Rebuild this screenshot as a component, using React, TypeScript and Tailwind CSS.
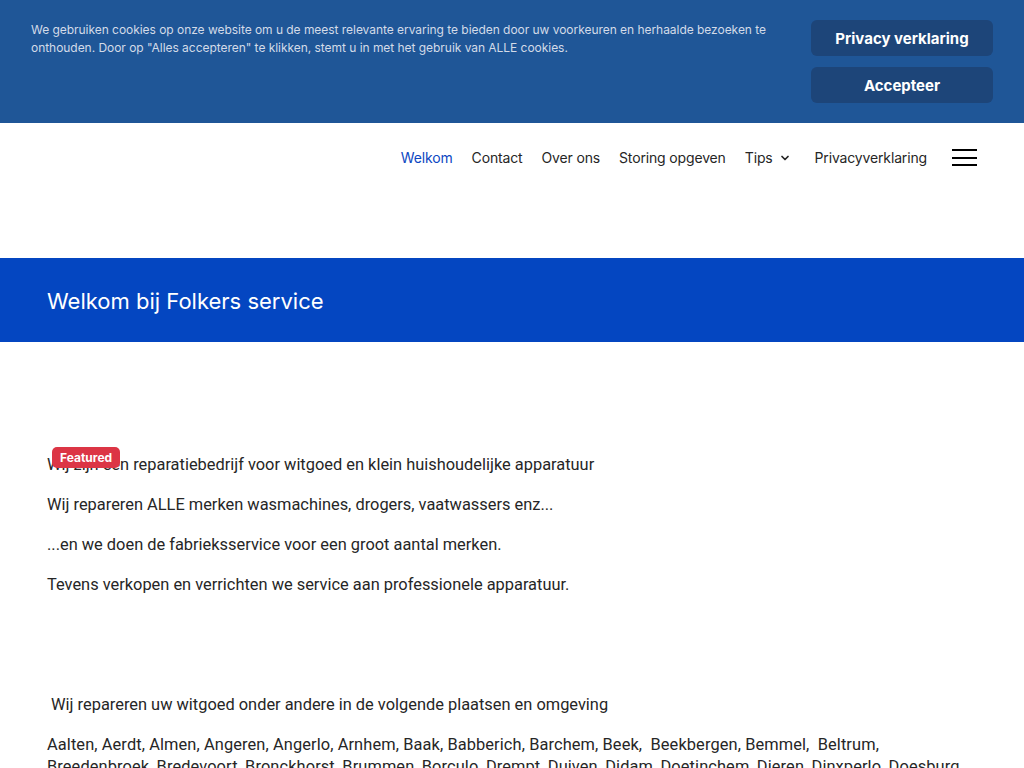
import React from 'react';
import { ChevronDown } from 'lucide-react';

const navItems = ['Welkom', 'Contact', 'Over ons', 'Storing opgeven', 'Tips', 'Privacyverklaring'];

const places =
  'Aalten, Aerdt, Almen, Angeren, Angerlo, Arnhem, Baak, Babberich, Barchem, Beek,  Beekbergen, Bemmel,  Beltrum, Breedenbroek, Bredevoort, Bronckhorst, Brummen, Borculo, Drempt, Duiven, Didam, Doetinchem, Dieren, Dinxperlo, Doesburg, Eefde, Eibergen, Elst, Epse, Gaanderen, Gendringen, Gorssel';

const CookieBar: React.FC = () => (
  <div className="bg-[#1f5697] h-[123px] flex justify-between pl-[31px] pr-[31px] pt-[20px]">
    <p className="text-[12px] leading-[18px] tracking-[-0.04px] text-[#d3dbe8] w-[745px] pt-[1px]">
      We gebruiken cookies op onze website om u de meest relevante ervaring te bieden door uw voorkeuren en herhaalde bezoeken te
      onthouden. Door op "Alles accepteren" te klikken, stemt u in met het gebruik van ALLE cookies.
    </p>
    <div className="flex flex-col gap-[11px] w-[182px]">
      <button className="h-[36px] pt-[2px] rounded-md bg-[#1d4579] text-white font-bold text-[15px]">Privacy verklaring</button>
      <button className="h-[36px] pt-[2px] rounded-md bg-[#1d4579] text-white font-bold text-[15px]">Accepteer</button>
    </div>
  </div>
);

const Header: React.FC = () => (
  <div className="h-[135px] bg-white flex justify-end pr-[47px] pt-[24px]">
    <nav className="flex items-start h-[22px]">
      <ul className="flex items-center gap-[19px] text-[14px] leading-[22px] tracking-[-0.15px]">
        {navItems.map((item, i) => (
          <li
            key={item}
            className={
              (i === 0 ? 'text-[#0d47c2]' : 'text-[#262626]') +
              ' flex items-center' +
              (item === 'Tips' ? ' gap-[6px] mr-[5px]' : '')
            }
          >
            {item}
            {item === 'Tips' && <ChevronDown size={12} strokeWidth={3.5} />}
          </li>
        ))}
      </ul>
      <div className="ml-[25px] w-[25px] flex flex-col gap-[5.5px] pt-[2px]">
        <span className="block h-[2px] bg-black" />
        <span className="block h-[2px] bg-black" />
        <span className="block h-[2px] bg-black" />
      </div>
    </nav>
  </div>
);

export default function App() {
  return (
    <div className="min-h-[768px] bg-white font-['Inter','Liberation_Sans',sans-serif]">
      <CookieBar />
      <Header />
      <div className="bg-[#0446c1] h-[84px] flex items-center px-[47px]">
        <h1 className="text-white text-[22px] leading-[28px] pt-[2px]">Welkom bij Folkers service</h1>
      </div>
      <main className="px-[47px] pt-[111px] text-[16.4px] leading-[24px] text-[#262626] font-['Roboto','Liberation_Sans',sans-serif]">
        <div className="relative">
          <span className="absolute left-[5px] top-[-6px] bg-[#dc3545] text-white text-[12px] leading-[21px] font-bold px-[8px] rounded-[5px] font-['Inter','Liberation_Sans',sans-serif]">
            Featured
          </span>
          <p className="mb-[16px]">Wij zijn een reparatiebedrijf voor witgoed en klein huishoudelijke apparatuur</p>
        </div>
        <p className="mb-[16px]">Wij repareren ALLE merken wasmachines, drogers, vaatwassers enz...</p>
        <p className="mb-[16px]">...en we doen de fabrieksservice voor een groot aantal merken.</p>
        <p className="mb-[96px]">Tevens verkopen en verrichten we service aan professionele apparatuur.</p>
        <p className="mb-[17px] whitespace-pre">{' Wij repareren uw witgoed onder andere in de volgende plaatsen en omgeving'}</p>
        <p className="whitespace-pre-wrap leading-[22px] tracking-[0.1px] w-[930px]">{places}</p>
      </main>
    </div>
  );
}
